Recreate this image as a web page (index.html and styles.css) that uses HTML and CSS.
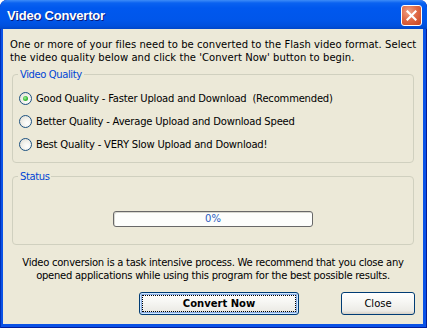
FILE: index.html
```html
<!DOCTYPE html>
<html>
<head>
<meta charset="utf-8">
<link rel="stylesheet" href="styles.css">
</head>
<body>
<div class="window">
  <div class="titlebar">
    <span class="title">Video Convertor</span>
    <span class="close-btn">
      <svg width="11" height="11" viewBox="0 0 11 11"><path d="M1.5 1.5 L9.5 9.5 M9.5 1.5 L1.5 9.5" stroke="#fff" stroke-width="2.2" stroke-linecap="square"/></svg>
    </span>
  </div>
  <div class="client">
    <p class="intro">One or more of your files need to be converted to the Flash video format. Select<br>the video quality below and click the 'Convert Now' button to begin.</p>
    <div class="group quality">
      <span class="group-title">Video Quality</span>
      <div class="options">
        <div class="option"><span class="radio checked"></span><span>Good Quality - Faster Upload and Download&nbsp; (Recommended)</span></div>
        <div class="option"><span class="radio"></span><span>Better Quality - Average Upload and Download Speed</span></div>
        <div class="option"><span class="radio"></span><span>Best Quality - VERY Slow Upload and Download!</span></div>
      </div>
    </div>
    <div class="group status">
      <span class="group-title">Status</span>
      <div class="progress"><span>0%</span></div>
    </div>
    <p class="note">Video conversion is a task intensive process. We recommend that you close any<br>opened applications while using this program for the best possible results.</p>
    <div class="buttons">
      <button class="btn default"><span class="focus">Convert Now</span></button>
      <button class="btn">Close</button>
    </div>
  </div>
</div>
</body>
</html>
```

FILE: styles.css
```css
html, body {
  margin: 0;
  padding: 0;
  background: #ffffff;
}
.window {
  width: 427px;
  height: 328px;
  box-sizing: border-box;
  display: flex;
  flex-direction: column;
  background: #0A52E6;
  border-radius: 7px 7px 0 0;
  box-shadow: inset 1px 0 #0030B8, inset -1px -1px #001C9A;
  overflow: hidden;
  font-family: "DejaVu Sans", Tahoma, sans-serif;
  font-size: 10px;
  color: #000;
}
.titlebar {
  height: 29px;
  flex: none;
  display: flex;
  align-items: center;
  justify-content: space-between;
  padding: 0 5px 0 7px;
  background: linear-gradient(#3D8CF8 0, #0A62F0 3px, #0058EE 8px, #0056EA 20px, #0050DD 26px, #0046C8 29px);
  border-radius: 7px 7px 0 0;
}
.title {
  font-family: "Liberation Sans", Arial, sans-serif;
  font-weight: bold;
  font-size: 13px;
  letter-spacing: -0.2px;
  color: #fff;
  text-shadow: 1px 1px #0A1A7A;
  padding-top: 1px;
}
.close-btn {
  width: 19px;
  height: 19px;
  border: 1px solid #fff;
  border-radius: 3px;
  background: radial-gradient(circle at 35% 30%, #EFA389 0, #E06B48 45%, #C8421E 100%);
  display: flex;
  align-items: center;
  justify-content: center;
  margin-top: 2px;
}
.client {
  flex: 1;
  background: #ECE9D8;
  margin: 0 4px 4px 3px;
  display: flex;
  flex-direction: column;
}
.intro {
  margin: 9px 0 0 7px;
  line-height: 13px;
  white-space: nowrap;
  letter-spacing: 0.05px;
}
.group {
  border: 1px solid #D0D0BF;
  border-radius: 4px;
  margin: 10px 9px 0 9px;
  display: flex;
  flex-direction: column;
  align-items: flex-start;
}
.group-title {
  margin: -7px 0 0 5px;
  padding: 0 2px;
  background: #ECE9D8;
  color: #0046D5;
  line-height: 13px;
  letter-spacing: -0.4px;
}
.options {
  padding: 6px 0 6px 6px;
  display: flex;
  flex-direction: column;
  letter-spacing: -0.2px;
}
.option {
  height: 23px;
  display: flex;
  align-items: center;
  gap: 4px;
}
.radio {
  width: 11px;
  height: 11px;
  border: 1px solid #1C5180;
  border-radius: 50%;
  background: radial-gradient(circle at 65% 65%, #FFFFFF 0, #F4F3EE 40%, #DCDAD0 100%);
  display: flex;
  align-items: center;
  justify-content: center;
}
.radio.checked::after {
  content: "";
  width: 5px;
  height: 5px;
  border-radius: 50%;
  background: radial-gradient(circle at 40% 40%, #A8EDA4 0, #3FBF3A 50%, #1E8E1A 100%);
}
.status {
  margin-top: 13px;
  align-items: center;
}
.status .group-title {
  align-self: flex-start;
}
.progress {
  width: 198px;
  height: 14px;
  margin: 28px 0 17px 0;
  border: 1px solid #686868;
  border-radius: 3px;
  background: #FDFEFC;
  box-shadow: inset 1px 1px #D8D8D0;
  display: flex;
  align-items: center;
  justify-content: center;
  color: #2A5CC0;
  line-height: 14px;
}
.note {
  margin: 11px 0 0 0;
  text-align: center;
  line-height: 13px;
  letter-spacing: -0.26px;
}
.buttons {
  margin-top: 10px;
  display: flex;
  justify-content: flex-end;
  gap: 42px;
  padding-right: 8px;
}
.btn {
  height: 23px;
  box-sizing: border-box;
  border: 1px solid #003C74;
  border-radius: 3px;
  background: linear-gradient(#FFFFFF 0, #F7F7F4 40%, #ECEBE6 85%, #D6D0C5 100%);
  font-family: "DejaVu Sans", Tahoma, sans-serif;
  font-size: 10px;
  color: #000;
  padding: 0;
  width: 74px;
}
.btn.default {
  width: 160px;
  font-weight: bold;
  padding: 2px;
  box-shadow: inset 0 0 0 1px #CEE7FF, inset 0 0 0 2px #89ADE4;
}
.focus {
  display: flex;
  align-items: center;
  justify-content: center;
  height: 100%;
  box-sizing: border-box;
  border: 1px dotted #000;
}
```
